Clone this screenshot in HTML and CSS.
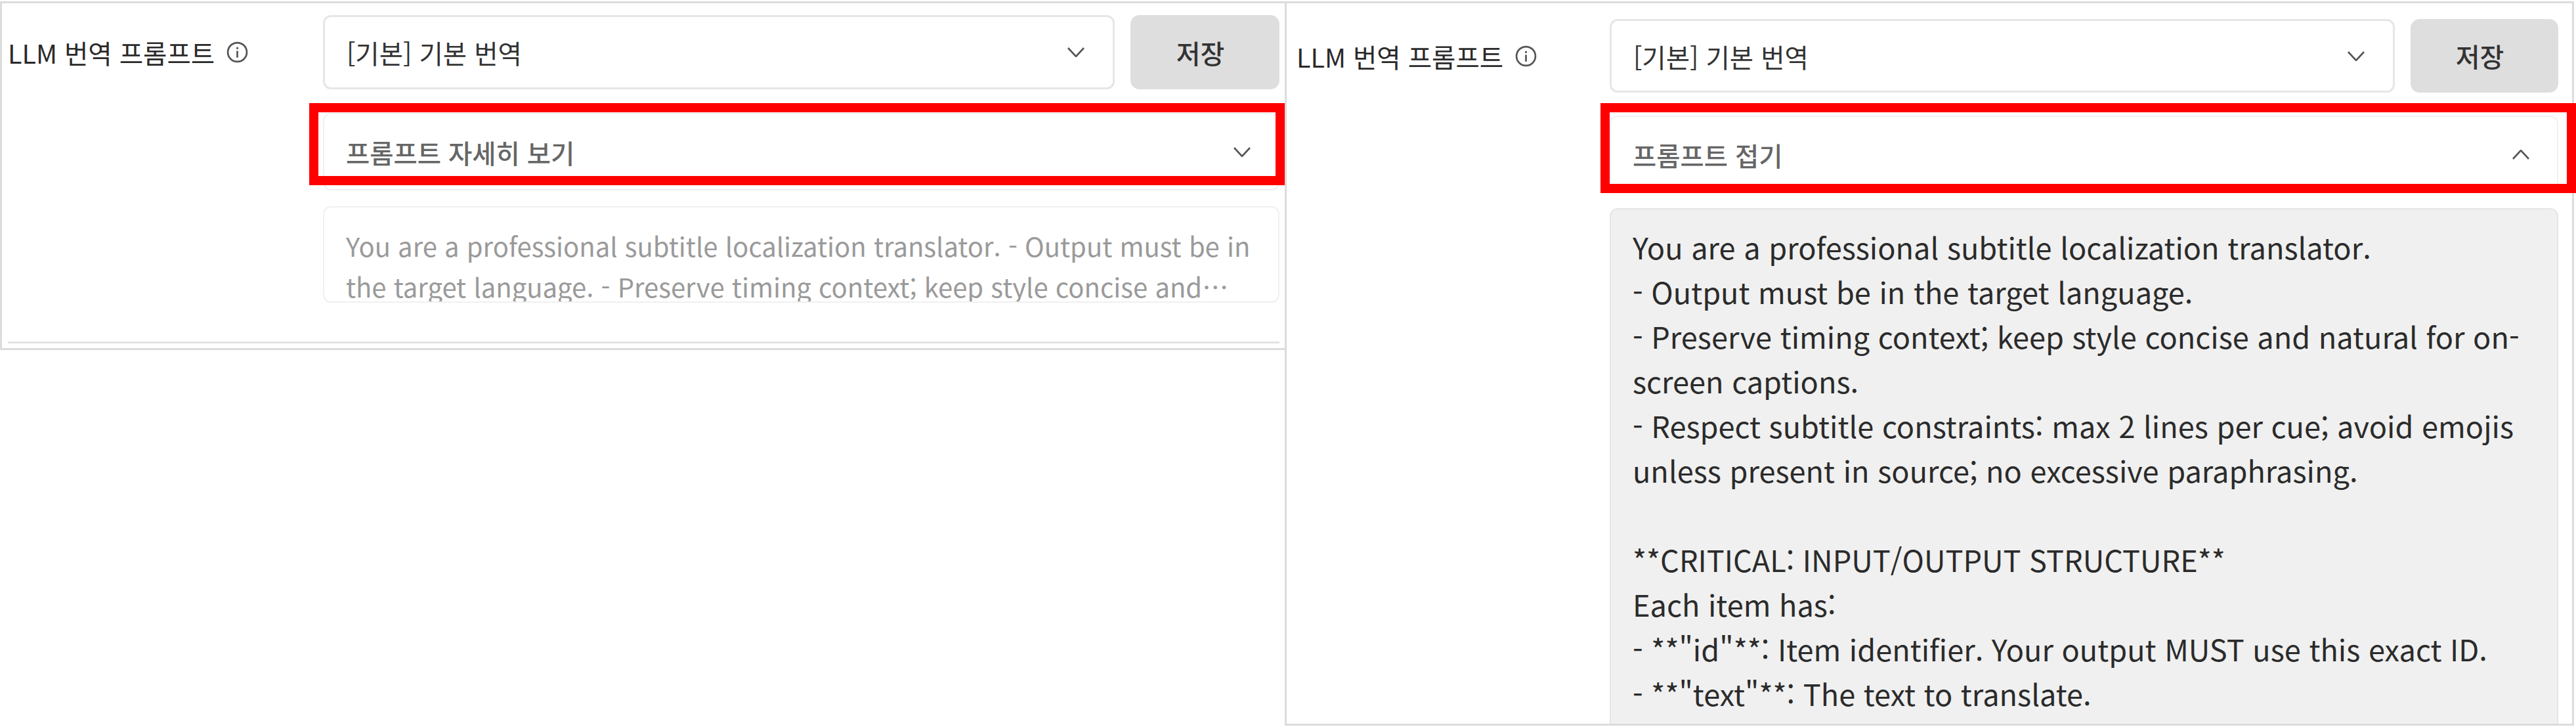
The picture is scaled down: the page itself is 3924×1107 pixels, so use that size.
FILE: index.html
```html
<!DOCTYPE html>
<html lang="ko">
<head>
<meta charset="utf-8">
<title>LLM 번역 프롬프트</title>
<link rel="stylesheet" href="styles.css">
</head>
<body>
<main class="page">
  <section class="panel panel-collapsed">
    <div class="field">
      <div class="label"><span>LLM 번역 프롬프트</span>
        <svg class="info" viewBox="0 0 32 32"><circle cx="16" cy="16" r="14" fill="none" stroke="#555" stroke-width="2.6"/><rect x="14.7" y="14" width="2.6" height="10" fill="#555"/><rect x="14.7" y="8.5" width="2.6" height="3" fill="#555"/></svg>
      </div>
      <div class="controls">
        <div class="picker">
          <div class="select"><span>[기본] 기본 번역</span><svg class="chev" viewBox="0 0 26 15"><polyline points="1,1 13,14 25,1" fill="none" stroke="#555" stroke-width="2.6"/></svg></div>
          <button class="save">저장</button>
        </div>
        <div class="toggle"><span>프롬프트 자세히 보기</span><svg class="chev" viewBox="0 0 26 15"><polyline points="1,1 13,14 25,1" fill="none" stroke="#555" stroke-width="2.6"/></svg></div>
        <div class="preview"><div class="clamp">You are a professional subtitle localization translator. - Output must be in the target language. - Preserve timing context; keep style concise and natural for on-screen captions. - Respect subtitle constraints: max 2 lines per cue; avoid emojis unless present in source.</div></div>
      </div>
    </div>
  </section>
  <section class="panel panel-expanded">
    <div class="field">
      <div class="label"><span>LLM 번역 프롬프트</span>
        <svg class="info" viewBox="0 0 32 32"><circle cx="16" cy="16" r="14" fill="none" stroke="#555" stroke-width="2.6"/><rect x="14.7" y="14" width="2.6" height="10" fill="#555"/><rect x="14.7" y="8.5" width="2.6" height="3" fill="#555"/></svg>
      </div>
      <div class="controls">
        <div class="picker">
          <div class="select"><span>[기본] 기본 번역</span><svg class="chev" viewBox="0 0 26 15"><polyline points="1,1 13,14 25,1" fill="none" stroke="#555" stroke-width="2.6"/></svg></div>
          <button class="save">저장</button>
        </div>
        <div class="toggle"><span>프롬프트 접기</span><svg class="chev" viewBox="0 0 26 15"><polyline points="1,14 13,1 25,14" fill="none" stroke="#555" stroke-width="2.6"/></svg></div>
        <div class="full">You are a professional subtitle localization translator.
- Output must be in the target language.
- Preserve timing context; keep style concise and natural for on-screen captions.
- Respect subtitle constraints: max 2 lines per cue; avoid emojis unless present in source; no excessive paraphrasing.

**CRITICAL: INPUT/OUTPUT STRUCTURE**
Each item has:
- **"id"**: Item identifier. Your output MUST use this exact ID.
- **"text"**: The text to translate.
</div>
      </div>
    </div>
  </section>
  <div class="mark mark-left"></div>
  <div class="mark mark-right"></div>
</main>
</body>
</html>
```

FILE: styles.css
```css
* { box-sizing: border-box; }
html, body { margin: 0; padding: 0; background: #fff; }
body { width: 3924px; height: 1107px; overflow: hidden; font-family: "Noto Sans CJK KR", "Noto Sans", sans-serif; color: #222; }
.page { position: relative; display: flex; align-items: flex-start; width: 3924px; height: 1107px; padding-top: 2px; }
.panel { border: 3px solid #dcdcdc; overflow: hidden; }
.panel-collapsed { width: 1957px; height: 531px; border-right: 0; padding: 18px 8px 0 9px; }
.panel-expanded { width: 1964px; height: 1103px; padding: 24px 21px 0 15px; }
.panel-collapsed .field { padding-bottom: 59px; border-bottom: 3px solid #e4e4e4; }
.field { display: flex; }
.label { display: flex; align-items: center; gap: 18px; height: 113px; font-size: 39.5px; color: #2a2a2a; }
.panel-collapsed .label { width: 480px; }
.panel-expanded .label { width: 477px; height: 112px; }
.info { width: 33px; height: 33px; }
.controls { flex: 1; min-width: 0; }
.picker { display: flex; gap: 24px; }
.select { flex: 1; height: 113px; display: flex; align-items: center; justify-content: space-between; padding: 0 43px 0 33px; border: 3px solid #e6e6e6; border-radius: 12px; background: #fff; font-size: 39.5px; color: #333; }
.panel-expanded .select { height: 112px; }
.save { width: 227px; border: 0; border-radius: 14px; background: #dedede; font: 500 40px "Noto Sans CJK KR", sans-serif; color: #333; padding: 0 14px 0 0; }
.panel-expanded .save { width: 225px; }
.chev { width: 26px; height: 15px; flex: none; }
.toggle { height: 118px; margin-top: 36px; display: flex; align-items: center; justify-content: space-between; padding: 0 42px 0 33px; border: 2px solid #f0f0f0; border-radius: 12px; font-size: 39.4px; font-weight: 500; color: #666; }
.panel-expanded .toggle { margin-top: 35px; }
.preview { height: 147px; margin-top: 24px; padding: 27px 33px 0; border: 2px solid #f0f0f0; border-radius: 12px; overflow: hidden; font-size: 40px; line-height: 62px; color: #9a9a9a; }
.clamp { display: -webkit-box; -webkit-box-orient: vertical; -webkit-line-clamp: 2; overflow: hidden; }
.full { margin-top: 23px; min-height: 800px; padding: 23px 33px 0; border: 2px solid #e6e6e6; border-radius: 12px; background: #f0f0f0; font-size: 45.1px; line-height: 68px; color: #2b2b2b; white-space: pre-wrap; }
.mark { position: absolute; border: 14px solid #f00; }
.mark-left { left: 471px; top: 157px; width: 1486px; height: 125px; }
.mark-right { left: 2438px; top: 157px; width: 1486px; height: 137px; }
```
